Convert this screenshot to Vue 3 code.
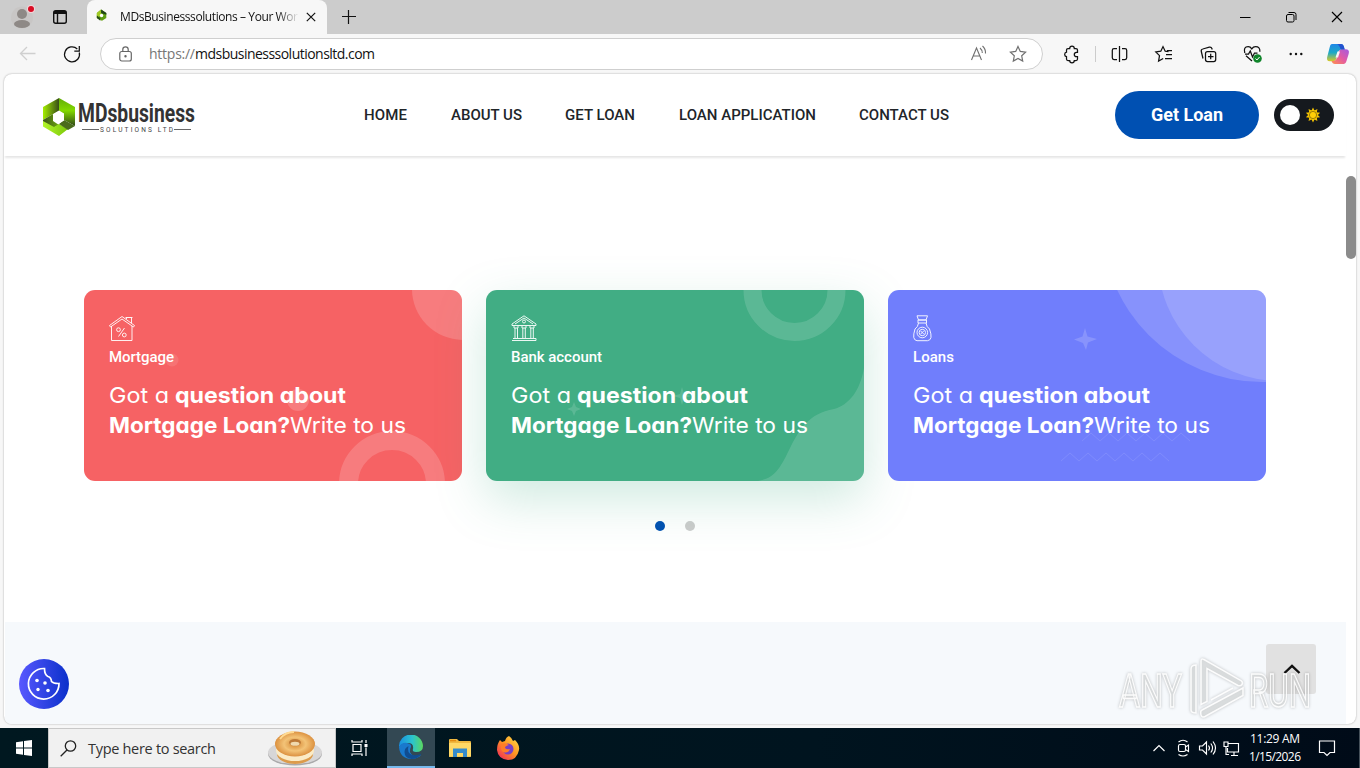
<script setup>
import { h } from 'vue'

// Single line of text set to an exact width on a given baseline.
const Fit = (p) =>
  h('svg', { width: p.w, height: p.h, style: { display: 'block', overflow: 'visible', flex: 'none' } }, [
    h('text', { x: 0, y: p.b, textLength: p.w, lengthAdjust: p.squeeze ? 'spacingAndGlyphs' : 'spacing', fill: 'currentColor' }, p.t)
  ])
Fit.props = ['w', 'h', 'b', 't', 'squeeze']

const nav = [
  { t: 'HOME', w: 43 },
  { t: 'ABOUT US', w: 71 },
  { t: 'GET LOAN', w: 70 },
  { t: 'LOAN APPLICATION', w: 137 },
  { t: 'CONTACT US', w: 90 }
]
const cards = [
  { kind: 'red', label: 'Mortgage', w: 65 },
  { kind: 'green', label: 'Bank account', w: 91 },
  { kind: 'blue', label: 'Loans', w: 41 }
]
const rays = Array.from({ length: 10 }, (_, i) => i * 36)
</script>

<template>
  <div class="screen">
    <div class="tabstrip">
      <svg class="avatar" width="32" height="34" viewBox="6 0 32 34">
        <circle cx="22" cy="17.500" r="11" fill="#c8c6c5" />
        <circle cx="22" cy="14" r="5" fill="#8e8986" />
        <ellipse cx="22" cy="24" rx="8" ry="4" fill="#8e8986" />
        <circle cx="31" cy="9" r="4" fill="#f4d5d8" /><circle cx="31" cy="9" r="3" fill="#d80d24" />
      </svg>
      <svg class="tabicon" width="16" height="34" viewBox="52 0 16 34" fill="none" stroke="#111" stroke-width="1.400">
        <rect x="53.700" y="10.700" width="12.600" height="12.600" rx="2" /><path d="M54 12.500h12" stroke-width="3" /><path d="M57.500 14v9" />
      </svg>
      <div class="tab">
        <svg class="favicon" width="12" height="13" viewBox="0 0 14 14">
          <path d="M6 0l6 4v6l-5 3-6-3V4z" fill="#5d9e12" /><path d="M1 4l5-4v6l-3 3 4 4-6-3z" fill="#a0ca22" /><path d="M6 0l6 4v2L6 4z" fill="#204419" /><path d="M1 7l4 3v3l-4-3z" fill="#274e17" /><circle cx="6.500" cy="7" r="2" fill="#fff" />
        </svg>
        <div class="tabtitle"><Fit :w="178" :h="34" :b="21" t="MDsBusinesssolutions – Your Wor" /></div>
        <svg class="tabclose" width="10" height="10" viewBox="0 0 10 10" stroke="#111" stroke-width="1.200"><path d="M.8.800l8.400 8.400M9.200.800L.8 9.200" /></svg>
      </div>
      <svg class="plus" width="14" height="14" viewBox="0 0 14 14" stroke="#111" stroke-width="1.200"><path d="M0 6.500h14M6.500 0v14" /></svg>
      <div class="winbtns">
        <svg width="46" height="34" viewBox="0 0 46 34" fill="none" stroke="#000"><path d="M18 17.500h10.500" /></svg>
        <svg width="46" height="34" viewBox="0 0 46 34" fill="none" stroke="#000"><rect x="18.500" y="14.500" width="7.500" height="7.500" rx="1.500" /><path d="M20.500 12.500h5.500q2 0 2 2v5.500" /></svg>
        <svg width="46" height="34" viewBox="0 0 46 34" fill="none" stroke="#000" stroke-width="1.150"><path d="M18 12l10 10M28 12L18 22" /></svg>
      </div>
    </div>

    <div class="toolbar">
      <svg width="100" height="40" viewBox="0 34 100 40" fill="none">
        <path d="M35.500 53.500H20.500M27 47l-6.500 6.500L27 60" stroke="#cfcfcf" stroke-width="1.300" />
        <path d="M79.300 52.500A7.500 7.500 0 1 1 77.300 49M79.300 46v5h-5" stroke="#111" stroke-width="1.250" />
      </svg>
      <div class="address">
        <svg class="lock" width="14" height="16" viewBox="0 0 14 16" fill="none" stroke="#666" stroke-width="1.200"><rect x=".8" y="5.500" width="11.500" height="9.500" rx="2" /><path d="M3.800 5.500V3.500a2.700 2.700 0 0 1 5.400 0v2" /><circle cx="6.500" cy="10.300" r=".6" fill="#666" /></svg>
        <div class="url"><Fit class="muted" :w="46" :h="30" :b="20" t="https://" /><Fit :w="180" :h="30" :b="20" t="mdsbusinesssolutionsltd.com" /></div>
        <svg class="addricons" width="72" height="30" viewBox="970 39 72 30" fill="none" stroke="#707070" stroke-width="1.100">
          <path d="M971.500 60l5-12 5 12M973.200 56h6.600M980 48q2.400 2 2.300 5M982.500 46q3.300 3 3 7.500" />
          <path d="M1018 46.500l2.300 4.900 5.300.7-3.900 3.700 1 5.300-4.700-2.600-4.700 2.600 1-5.300-3.900-3.700 5.300-.7z" stroke-width="1.200" />
        </svg>
      </div>
      <svg width="317" height="40" viewBox="1043 34 317 40" fill="none" stroke="#111" stroke-width="1.250">
        <defs><linearGradient id="cop1" x1="0" y1="0" x2="0" y2="1"><stop stop-color="#1f87e8" /><stop offset=".5" stop-color="#1da9c6" /><stop offset="1" stop-color="#dcca24" /></linearGradient><linearGradient id="cop2" x1="1" y1="0" x2="0" y2="1"><stop stop-color="#a25be2" /><stop offset=".5" stop-color="#e35aa4" /><stop offset="1" stop-color="#ff914d" /></linearGradient></defs>
        <path d="M1068 48.500h1.700a2.300 2.300 0 0 1 4.600 0h1.700q1.500 0 1.500 1.500v2.300h-1a2.200 2.200 0 0 0 0 4.400h1V59q0 1.500-1.500 1.500h-1.700a2.300 2.300 0 0 1-4.600 0H1068q-1.500 0-1.500-1.500v-2.300a2.300 2.300 0 0 1 0-4.500V50q0-1.500 1.500-1.500z" />
        <path d="M1095.500 46v16" stroke="#ccc" stroke-width="1" />
        <path d="M1117 48.500h-3q-1.700 0-1.700 1.700v7.600q0 1.700 1.700 1.700h3M1122 48.500h3q1.700 0 1.700 1.700v7.600q0 1.700-1.700 1.700h-3M1119.500 46v16" />
        <path d="M1168.500 51.600l-3.300-.4-2.200-4.600-2.200 4.600-5 .8 3.700 3.600-.9 5.400 4.600-2.500M1167 50.500h5M1166 54.500h6M1165 58.500h7" />
        <rect x="1205.500" y="51.500" width="10.200" height="10" rx="2" /><path d="M1208 56.500h5.500M1210.700 53.700v5.500M1203 58.500l-1.700-7q-.5-2 1.500-2.500l6.500-1.800q2-.4 2.700 1.500l.2.800" />
        <path d="M1252 61l-6-5.300M1244.800 53q-1.700-6.300 3.400-6.300 2.200 0 3.600 2.200 1.400-2.200 3.800-2.200 4.500 0 4.300 5M1245 54h3.500l1.800-3 2.200 6 2-4h3" />
        <circle cx="1257.500" cy="58.500" r="4.300" fill="#10852b" stroke="none" /><path d="M1255.500 58.500l1.400 1.500 2.700-3" stroke="#fff" stroke-width="1" />
        <g fill="#111" stroke="none"><circle cx="1290.700" cy="54" r="1.200" /><circle cx="1296" cy="54" r="1.200" /><circle cx="1301.300" cy="54" r="1.200" /></g>
        <g stroke="none"><path d="M1332 44h9q2 0 2.700 2l1 3.500h-3q-2.700 0-3.500 2.800l-1.700 6q-.9 3-3.500 3h-3q-4.300 0-2.600-5l2.300-9q.7-3.300 2.300-3.300z" fill="url(#cop1)" /><path d="M1344 64h-9q-2.500 0-3.500-3h2q2.500 0 3.300-2.800l1.700-6q.8-3 3.500-3h3.500q4.500 0 3.200 4.500l-2.300 7.500q-.8 2.800-2.400 2.800z" fill="url(#cop2)" /><path d="M1337 44h4q2 0 2.700 2l1 3.500h-4q-1.600-5-3.700-5.500z" fill="#2352ce" /><path d="M1337.500 51.500h2.500l-2 6h-2.500z" fill="#f7f7f7" /></g>
      </svg>
    </div>

    <div class="page">
      <header class="siteheader">
        <svg class="logomark" width="34" height="40" viewBox="42 97 34 40">
          <defs><linearGradient id="lg1"><stop stop-color="#a4ee00" /><stop offset="1" stop-color="#384d18" /></linearGradient><linearGradient id="lg2" x1="0" y1="0" x2="0" y2="1"><stop stop-color="#62ad08" /><stop offset=".45" stop-color="#83d900" /><stop offset="1" stop-color="#314819" /></linearGradient><linearGradient id="lg3"><stop stop-color="#3b561a" /><stop offset="1" stop-color="#6ba40c" /></linearGradient><linearGradient id="lg4"><stop stop-color="#b2f52a" /><stop offset="1" stop-color="#7cc80a" /></linearGradient></defs>
          <path d="M43 107l16-9v12.500l-6 3.500L43 120z" fill="url(#lg1)" />
          <path d="M59 98l16 9v19l-11-6v-6.500l-5-3z" fill="url(#lg2)" />
          <path d="M43 120l10-6v7l6 4-8 4-8-6z" fill="url(#lg3)" />
          <path d="M43 121l11 6 5-3 9 5-9 7-16-9.500z" fill="url(#lg4)" /><path d="M64 120l11 6-7 4-9-6z" fill="#4a6b1c" />
          <path d="M59 111l5 3v6.500l-5 3-5-3V114z" fill="#fff" />
        </svg>
        <div class="brand">
          <Fit class="brandname" squeeze="1" :w="117" :h="23" :b="21" t="MDsbusiness" />
          <div class="brandsub"><i></i><Fit :w="73" :h="8" :b="6.500" t="SOLUTIONS LTD" /><i></i></div>
        </div>
        <nav><a v-for="n in nav" :key="n.t"><Fit :w="n.w" :h="20" :b="15" :t="n.t" /></a></nav>
        <button class="cta"><Fit :w="72" :h="24" :b="18" t="Get Loan" /></button>
        <div class="toggle">
          <span class="knob"></span>
          <svg width="16" height="16" viewBox="-8 -8 16 16"><g v-for="r in rays" :key="r" :transform="`rotate(${r})`"><path d="M-1.700-4L0-7.500 1.700-4z" fill="#f5c400" /></g><circle r="4.700" fill="#f5c400" /><circle r="3.600" fill="#ffcf08" stroke="#705a0c" stroke-width=".7" /></svg>
        </div>
      </header>

      <main>
        <div class="cards">
          <article v-for="c in cards" :key="c.kind" class="card" :class="c.kind">
            <svg class="decor" width="378" height="191" viewBox="0 0 378 191" fill="#fff">
              <g v-if="c.kind === 'red'" fill-opacity=".17" stroke-opacity=".17">
                <circle cx="379" cy="-1" r="51" /><circle cx="308" cy="194" r="43.500" fill="none" stroke="#fff" stroke-width="19" /><circle cx="88" cy="70" r="6.500" fill-opacity=".1" /><circle cx="214" cy="110" r="11" />
              </g>
              <g v-else-if="c.kind === 'green'" fill-opacity=".14" stroke-opacity=".14">
                <circle cx="308.500" cy="0" r="42" fill="none" stroke="#fff" stroke-width="18" />
                <path d="M378 78C374 101 363 115 348 119C322 124 314 139 305 156C294 179 289 188 272 191H378z" />
                <path d="M88 112l2 5 5 2-5 2-2 5-2-5-5-2 5-2zM196 97l2 7 7 2-7 2-2 7-2-7-7-2 7-2z" />
              </g>
              <g v-else>
                <circle cx="374" cy="-68" r="160" fill-opacity=".16" /><circle cx="392" cy="-31" r="122" fill-opacity=".14" />
                <path d="M197 38l2.500 8.500L209 49l-9 3.500L198 60l-3-7-9-3.500 8.500-3z" fill-opacity=".17" />
                <path d="M173 171l9-8 9 8 9-8 9 8 9-8 9 8 9-8 9 8 9-8 9 8 9-8 9 8M194 151l9-8 9 8 9-8 9 8 9-8 9 8 9-8 9 8 9-8 9 8 9-8 9 8" fill="none" stroke="#fff" stroke-opacity=".1" />
              </g>
            </svg>
            <svg v-if="c.kind === 'red'" class="glyph" width="27" height="27" viewBox="0 0 27 27">
              <path d="M2.500 11v14.500h20.500V11M.5 10.500L13 1.500l12.500 9-1 1.500L13 4 1.500 12zM17.500 4V2.500h5v5.800M16.500 2.500h7" /><circle cx="9.500" cy="14.700" r="1.900" /><circle cx="15.300" cy="20" r="1.900" /><path d="M15.500 13l-6 8.500" />
            </svg>
            <svg v-else-if="c.kind === 'green'" class="glyph" width="27" height="27" viewBox="0 0 27 27">
              <path d="M1 9L13 .8 25 9v1.500H1zM4 9l9-6 9 6M1 25.500h24v-2H2M3 11v2h4v-2M11 11v2h4v-2M19 11v2h4v-2M4 13v10M6.500 13v10M11.800 13v10M14.300 13v10M19.800 13v10M22.300 13v10" /><circle cx="13" cy="6.500" r="1.500" />
            </svg>
            <svg v-else class="glyph" width="27" height="27" viewBox="0 0 27 27">
              <path d="M4 .8h10.500L13 5H5.500zM5 5h8.500v3H5zM5.500 8Q5 12 2 14Q-1.500 25 4 25.700H14.500Q20.500 25 16.500 14Q13.500 12 13 8" /><circle cx="9.300" cy="17.500" r="5.300" /><circle cx="9.300" cy="17.500" r="3.200" /><path d="M7.700 16l3 3M10.700 16l-3 3" />
            </svg>
            <Fit class="label" :w="c.w" :h="22" :b="16" :t="c.label" />
            <h3>
              <Fit class="light" squeeze="1" :w="60" :h="30" :b="21" t="Got a" /><Fit class="strong gap" squeeze="1" :w="171" :h="30" :b="21" t="question about" />
            </h3>
            <h3><Fit class="strong" squeeze="1" :w="181" :h="30" :b="21" t="Mortgage Loan?" /><Fit class="light" squeeze="1" :w="116" :h="30" :b="21" t="Write to us" /></h3>
          </article>
        </div>
        <div class="dots"><span class="on"></span><span></span></div>
      </main>
      <section class="next"></section>
      <div class="scrollthumb"></div>
      <div class="cookie">
        <svg width="36" height="36" viewBox="0 0 36 36" fill="none" stroke="#fff" stroke-width="1.700"><path d="M18.500 2.500A15.300 15.300 0 1 0 33 17.500q-5.500.2-7.500-2-.2-4-3.500-5-3.500-1.500-3.500-8z" /><g fill="#fff" stroke="none"><circle cx="11" cy="14.500" r="1.800" /><circle cx="19" cy="17" r="1.800" /><circle cx="12" cy="23.500" r="1.700" /><circle cx="22" cy="24.500" r="1.800" /></g></svg>
      </div>
      <div class="totop"><svg width="18" height="12" viewBox="0 0 18 12" fill="none" stroke="#111" stroke-width="2.400"><path d="M1.500 10L9 2.800 16.500 10" /></svg></div>
      <svg class="watermark" width="200" height="66" viewBox="1115 656 200 66">
        <g class="wm">
          <text x="1119" y="707" textLength="63" lengthAdjust="spacingAndGlyphs">ANY</text>
          <text x="1249" y="707" textLength="62" lengthAdjust="spacingAndGlyphs">RUN</text>
          <path d="M1201 661q0-3 3-1.500l37 21q2.500 2 1 4t-4 1l-31-17v33l-6 3zM1196 665q-5 0-5 4v41q0 3 5 3zM1243 688l-41 22q-2 1-1 5 1 3 4 1.500l38-21zM1211 700l22-12" />
        </g>
      </svg>
    </div>

    <footer class="taskbar">
      <div class="start"><svg width="16" height="16" viewBox="0 0 16 16" fill="#fff"><path d="M0 2.200L7 1.200v6.300H0zM8 1l8-1v7.500H8zM0 8.500h7v6.300l-7-1zM8 8.500h8V16l-8-1.100z" /></svg></div>
      <div class="search">
        <svg width="17" height="17" viewBox="0 0 17 17" fill="none" stroke="#222" stroke-width="1.300"><circle cx="10.500" cy="6" r="5.200" /><path d="M7 10L.7 16.300" /></svg>
        <Fit :w="128" :h="40" :b="26" t="Type here to search" />
        <svg class="bagel" width="56" height="38" viewBox="0 0 56 38">
          <defs><radialGradient id="bg"><stop stop-color="#d3832e" /><stop offset=".55" stop-color="#f3c377" /><stop offset="1" stop-color="#dc9140" /></radialGradient></defs>
          <ellipse cx="28" cy="25" rx="27" ry="11.500" fill="#aaa9aa" /><ellipse cx="28" cy="23.500" rx="27" ry="11.500" fill="#d7d6d7" />
          <ellipse cx="28" cy="25" rx="18" ry="10" fill="#dc9b4b" /><ellipse cx="28" cy="21.500" rx="19" ry="10.500" fill="#fbebc6" /><ellipse cx="28" cy="15" rx="20" ry="12.500" fill="url(#bg)" /><ellipse cx="28" cy="13.500" rx="6" ry="3.500" fill="#bc7937" /><ellipse cx="28" cy="14.800" rx="4.500" ry="2" fill="#f0d9ae" /><path d="M13 10q5-7 14-7" stroke="#ffda91" stroke-width="2" fill="none" />
        </svg>
      </div>
      <div class="app"><svg width="18" height="18" viewBox="0 0 18 18" fill="none" stroke="#fff" stroke-width="1.200"><path d="M1 1v2h10V1M1 17v-2h10v2M2 5.500h8v7H2zM15 1v3M15 8.500V17" /><path d="M13.500 5h3v3h-3z" fill="#fff" stroke="none" /></svg></div>
      <div class="app active">
        <svg width="24" height="24" viewBox="0 0 24 24"><defs><linearGradient id="eg" x1="0" y1="0" x2="1" y2="0"><stop stop-color="#188fe0" /><stop offset=".55" stop-color="#2bc3cf" /><stop offset="1" stop-color="#5bd85f" /></linearGradient></defs>
          <path d="M0 12A12 12 0 0 1 24 11q0 6-7 6-4 0-3-3 1-6-5-6-6 0-9 4z" fill="url(#eg)" /><path d="M0 12q3-5 8-4 5 1 4 4-3 5 2 8.500 4 2 8.500-.5Q18 24 12 24 1 23.500 0 12z" fill="#1979cd" /><path d="M9.500 11q-2 7 4 9 5 1 9-1.500Q19 24 12.500 24q-7-1-7-7 0-4 4-6z" fill="#104d91" /></svg>
      </div>
      <div class="app"><svg width="22" height="20" viewBox="0 0 22 20"><path d="M0 2q0-1 1-1h7l2 2h11q1 0 1 1v14q0 1-1 1H0z" fill="#f0b840" /><path d="M0 5h22v13.500H0z" fill="#ffd866" /><path d="M4 10.500h14V19h-4v-4H8v4H4z" fill="#368bcb" /><path d="M1 2h6v1.300H1z" fill="#e58b10" /></svg></div>
      <div class="app"><svg width="24" height="24" viewBox="0 0 24 24"><defs><linearGradient id="ff" x1="1" y1="0" x2=".1" y2="1"><stop stop-color="#ffe34b" /><stop offset=".5" stop-color="#ff9622" /><stop offset="1" stop-color="#f0255c" /></linearGradient></defs><path d="M13 0q3 2 4 5l2-1q5 5 4 10-2 10-11 10Q2 23 1 14q0-6 3-10l2 2 3-1q1-4 4-5z" fill="url(#ff)" /><circle cx="12" cy="13" r="5.500" fill="#7940c4" /><path d="M5 8q4-2 8 1-4 1-4 3 2 2 5 1-2 5-7 3-3-3-2-8z" fill="#ff7d28" /></svg></div>
      <div class="tray">
        <svg width="94" height="40" viewBox="1150 728 94 40" fill="none" stroke="#fff" stroke-width="1.150">
          <path d="M1153.500 751l5.500-5.500 5.500 5.500" /><rect x="1178.500" y="744.500" width="7" height="7" rx="1.500" /><path d="M1185.500 747l3-2v6.500l-3-2M1178.500 742q4.500-3.500 9 0M1178.500 754.500q4.500 3 9 0" />
          <path d="M1199.500 746h3l4-4v12l-4-4h-3zM1208.500 745.500q2 2.500 0 5M1210.800 743.500q3.500 4.500 0 9M1213 741.500q5 6.500 0 13" />
          <path d="M1228 743.500h10.500v8.500h-11v-4M1231 755.500h7M1234 752v3.500M1224 742h4v4.500h-4zM1226 746.500v8h3" />
        </svg>
        <div class="clock"><Fit :w="50" :h="18" :b="11" t="11:29 AM" /><Fit :w="52" :h="18" :b="11" t="1/15/2026" /></div>
        <svg class="note" width="18" height="18" viewBox="0 0 18 18" fill="none" stroke="#fff" stroke-width="1.200"><path d="M1.500 2h15v11.500H12l-3 3-3-3H1.500z" /></svg>
      </div>
    </footer>
  </div>
</template>

<style>
html, body { margin: 0; overflow: hidden; }
</style>
<style scoped>
* { box-sizing: border-box; }
.screen { width: 1360px; height: 768px; display: flex; flex-direction: column; background: #f7f7f7; font: 12px "Open Sans", "Noto Sans", sans-serif; color: #111; overflow: hidden; }
svg { flex: none; display: block; }
.tabstrip { height: 34px; flex: none; background: #ccc; display: flex; align-items: center; }
.avatar { margin-left: 6px; }
.tabicon { margin-left: 14px; }
.tab { margin-left: 19px; width: 240px; height: 34px; background: #f7f7f7; border-radius: 8px 8px 0 0; display: flex; align-items: center; padding-left: 9px; }
.favicon { margin-top: -3px; }
.tabtitle { margin-left: 12px; width: 179px; font-size: 12px; -webkit-mask-image: linear-gradient(90deg, #000 88%, transparent); mask-image: linear-gradient(90deg, #000 88%, transparent); }
.tabclose { margin-left: 7px; }
.plus { margin-left: 15px; }
.winbtns { margin-left: auto; display: flex; }
.toolbar { height: 40px; flex: none; display: flex; }
.address { width: 943px; height: 32px; margin-top: 4px; border: 1px solid #cfcfcf; border-radius: 16px; background: #fff; display: flex; }
.lock { margin: 7px 0 0 18px; }
.url { display: flex; margin-left: 16px; font-size: 14px; }
.muted { color: #777; }
.addricons { margin-left: auto; }
.page { position: relative; width: 1352px; height: 650px; flex: none; margin-left: 4px; background: #fff; border-radius: 8px; box-shadow: 0 0 2px rgba(0, 0, 0, .35); overflow: hidden; }
.siteheader { width: 1342px; height: 82px; display: flex; align-items: center; padding-left: 38px; box-shadow: 0 3px 2px -1px rgba(0, 0, 0, .1); font-family: Roboto, sans-serif; }
.logomark { margin-top: 4px; }
.brand { width: 118px; margin: 4px 0 0 2px; color: #333; }
.brandname { font-size: 25px; font-weight: 700; }
.brandsub { display: flex; align-items: center; gap: 1px; margin: 1px 0 0 4px; font-size: 6.500px; color: #444; }
.brandsub i { width: 17px; height: 1px; background: #666; }
nav { display: flex; gap: 43.500px; margin-left: 168px; font-size: 15px; font-weight: 500; color: #212529; }
.cta { margin: 0 0 0 165.500px; border: 0; padding: 0; width: 144px; height: 48px; border-radius: 24px; background: #0050b2; color: #fff; font: 700 18px Roboto, sans-serif; display: flex; align-items: center; justify-content: center; }
.toggle { margin-left: 15px; width: 60px; height: 32px; border-radius: 16px; background: #15191e; display: flex; align-items: center; padding-left: 6px; gap: 5px; }
.knob { width: 20px; height: 20px; border-radius: 50%; background: #fff; }
main { height: 466px; padding: 134px 0 0 80px; }
.cards { display: flex; gap: 24px; }
.card { position: relative; width: 378px; height: 191px; border-radius: 11px; padding: 25px; color: #fff; }
.red { background: #f66264; }
.green { background: #41ad84; box-shadow: 0 18px 50px rgba(65, 173, 132, .25); }
.blue { background: #707efc; }
.decor { position: absolute; left: 0; top: 0; border-radius: 11px; }
.glyph { position: relative; fill: none; stroke: #fff; stroke-width: .95; opacity: .95; }
.label { position: relative; margin-top: 4px; font: 500 15px Roboto, sans-serif; }
h3 { position: relative; display: flex; margin: 0; font: 400 22px Inter, sans-serif; font-feature-settings: "cv11"; }
.label + h3 { margin-top: 14px; }
.light { font-weight: 400; }
.strong { font-weight: 650; }
.gap { margin-left: 6px; }
.dots { display: flex; gap: 20px; margin: 40px 0 0 571px; }
.dots span { width: 10px; height: 10px; border-radius: 50%; background: #ccc; }
.dots .on { background: #0050b2; }
.next { height: 102px; width: 1341px; margin-left: 1px; background: #f6f9fc; }
.scrollthumb { position: absolute; right: 0; top: 102px; width: 10px; height: 83px; border-radius: 5px; background: #8b8b8b; }
.cookie { position: absolute; left: 15px; top: 585px; width: 50px; height: 50px; border-radius: 50%; background: linear-gradient(90deg, #5958ff, #0a30ca); display: flex; align-items: center; justify-content: center; }
.totop { position: absolute; left: 1262px; top: 570px; width: 50px; height: 50px; border-radius: 3px; background: #e1e1e1; display: flex; align-items: center; justify-content: center; padding-left: 2px; }
.watermark { position: absolute; left: 1111px; top: 582px; overflow: visible; }
.wm { fill: rgba(225, 227, 228, .5); stroke: rgba(255, 255, 255, .9); stroke-width: 1.500; font: 400 47px Roboto, sans-serif; filter: drop-shadow(0 0 1.500px rgba(0, 0, 0, .28)); }
.taskbar { margin-top: 4px; height: 40px; flex: none; display: flex; background: linear-gradient(90deg, #001820, #00141f 60%, #000b18); }
.start { width: 48px; display: flex; align-items: center; justify-content: center; }
.search { width: 288px; height: 40px; background: #f1f1f1; border: 1px solid #c8c8c8; display: flex; align-items: center; padding-left: 11px; color: #333; font-size: 14.500px; }
.search > svg:nth-child(2) { margin-left: 11px; }
.bagel { margin-left: 51px; }
.app { width: 48px; display: flex; align-items: center; justify-content: center; }
.app:nth-child(3) { margin-right: 3px; }
.active { background: #334853; border-bottom: 2px solid #76b9ed; margin-right: 1px; }
.tray { margin-left: auto; display: flex; color: #fff; width: 210px; box-shadow: inset -5px 0 0 -4px #46515a; }
.clock { display: flex; flex-direction: column; align-items: center; width: 62px; padding-top: 4px; font-size: 12px; }
.note { margin: 11px 0 0 12px; }
</style>
